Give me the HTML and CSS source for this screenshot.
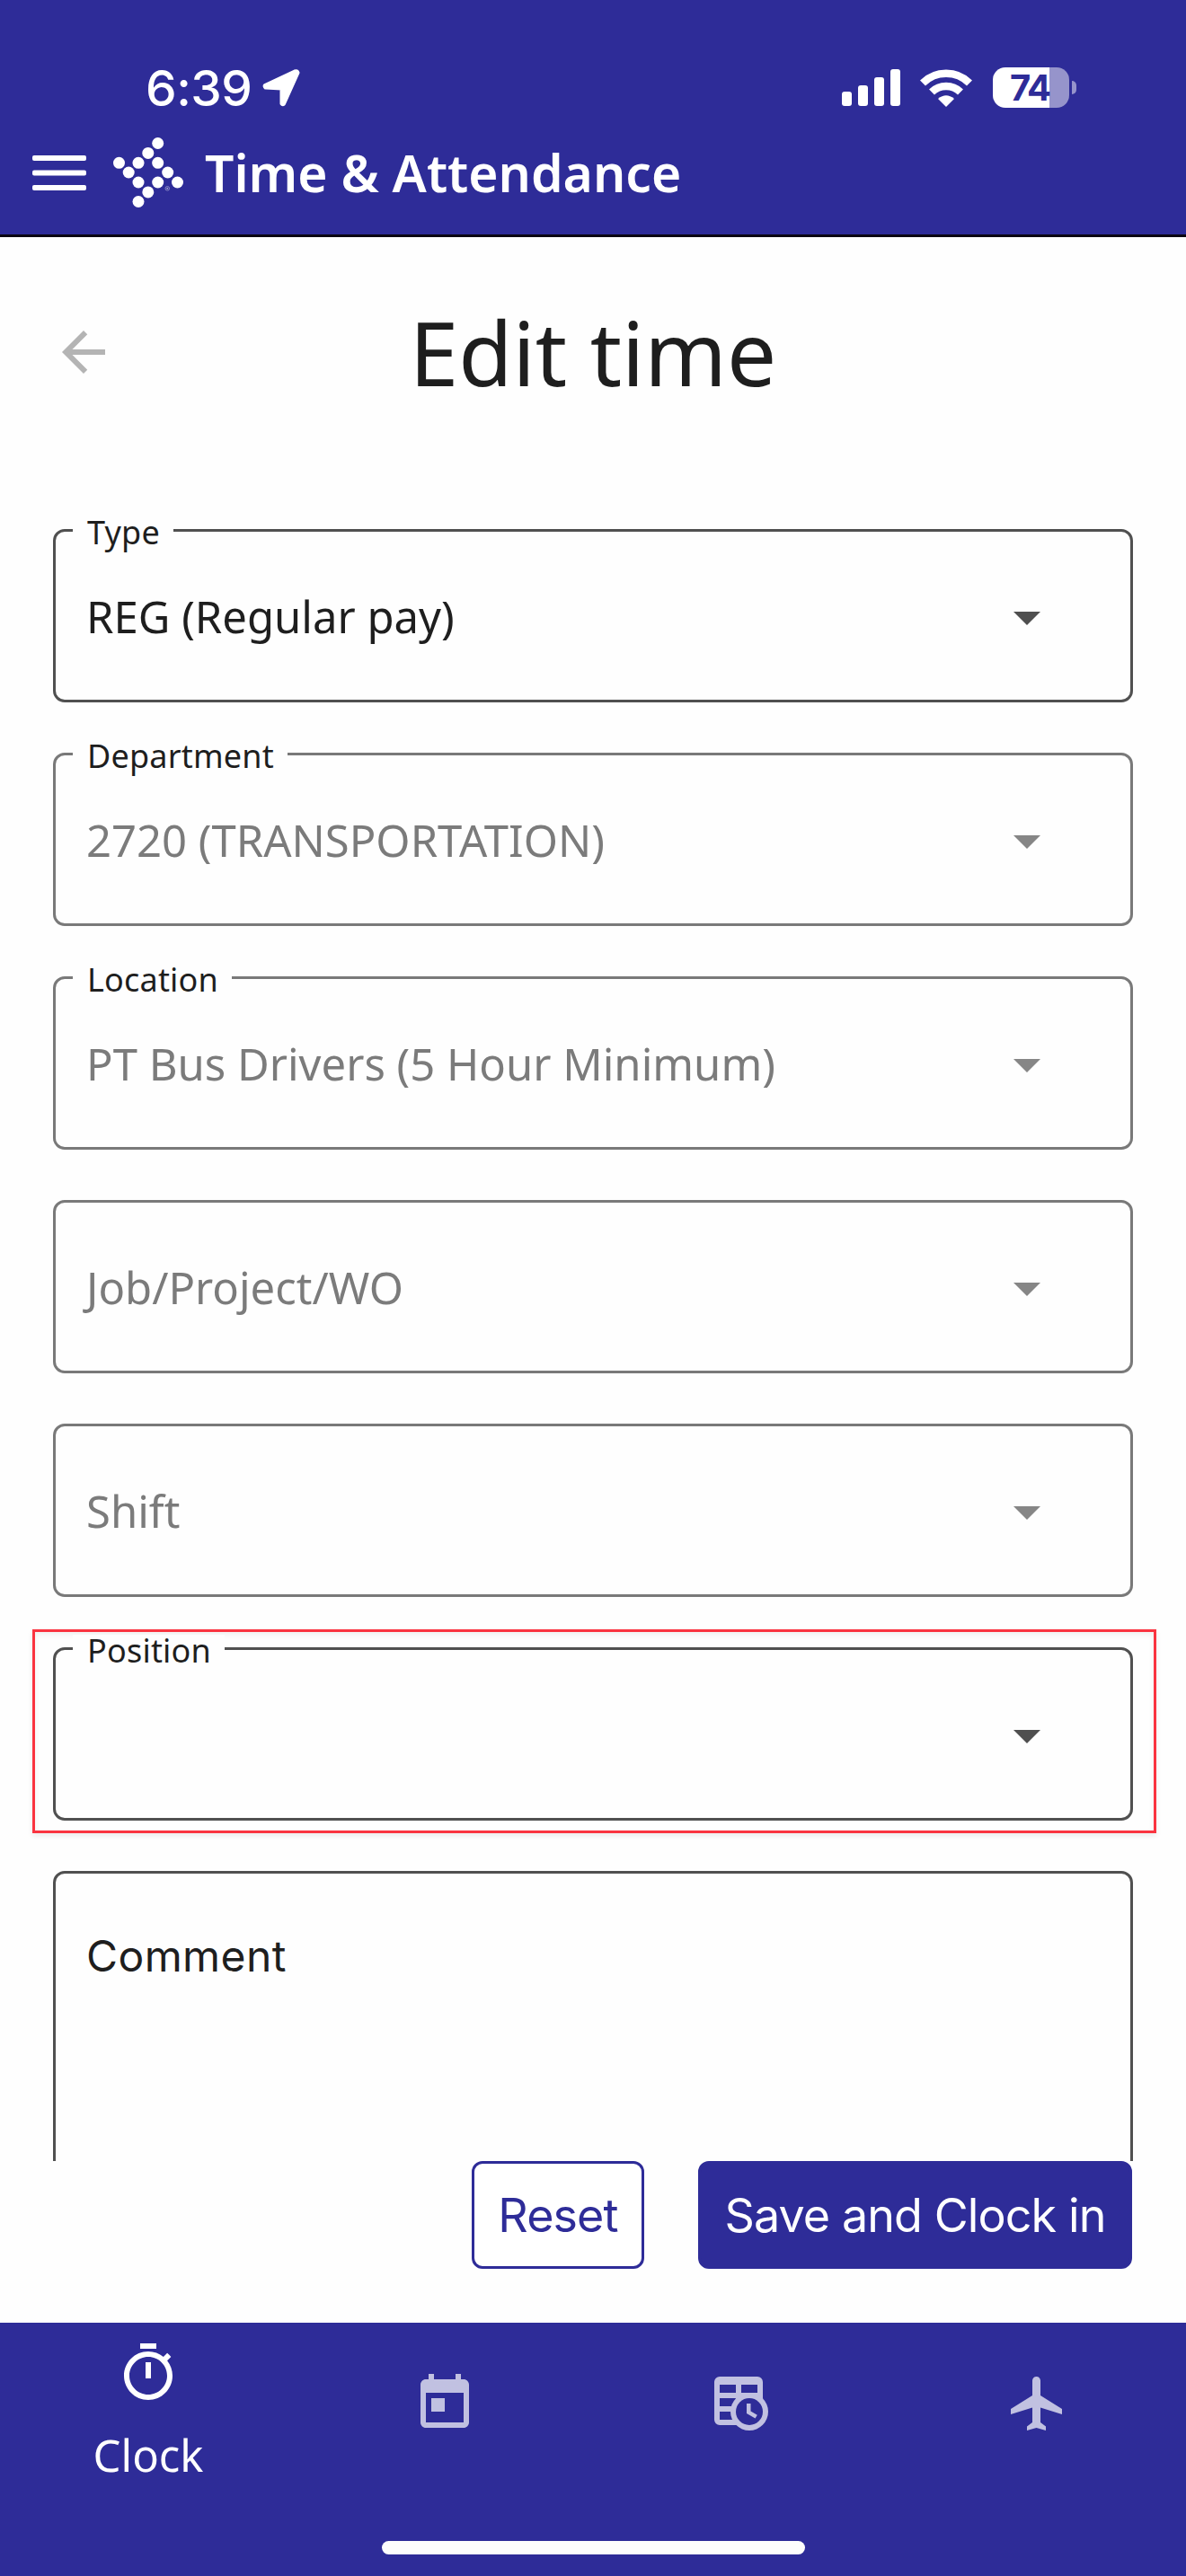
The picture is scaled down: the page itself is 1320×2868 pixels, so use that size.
FILE: index.html
```html
<!DOCTYPE html>
<html lang="en">
<head>
  <meta charset="UTF-8">
  <meta name="viewport" content="width=device-width, initial-scale=1.0">
  <title>Time &amp; Attendance</title>
  <link rel="stylesheet" href="styles.css">
</head>
<body>
  <header class="header">
    <!-- Status bar -->
    <div class="status-bar">
      <div class="status-left">
        <span class="status-time">6:39</span>
        <svg class="location" viewBox="0 0 42 42" width="42" height="42">
          <path d="M3 18 36 2.5Q39 1.500 39.500 4L24 38.500Q22.500 40 21.500 38.500V21.500L3.500 20.500Q2 19 3 18Z" fill="#fff" stroke="#fff" stroke-width="4" stroke-linejoin="round"/>
        </svg>
      </div>
      <div class="status-right">
        <svg viewBox="0 0 65 41" width="65" height="41" fill="#fff">
          <rect x="0" y="25" width="11" height="16" rx="3"/>
          <rect x="18" y="18" width="11" height="23" rx="3"/>
          <rect x="36" y="9" width="11" height="32" rx="3"/>
          <rect x="54" y="0" width="11" height="41" rx="3"/>
        </svg>
        <svg class="wifi" viewBox="0 0 58 42" width="58" height="42">
          <path d="M3 15.500A37 37 0 0 1 55 15.500" fill="none" stroke="#fff" stroke-width="8.500"/>
          <path d="M13 25.500A23 23 0 0 1 45 25.500" fill="none" stroke="#fff" stroke-width="8.500"/>
          <path d="M29 42 20 33Q29 25.500 38 33Z" fill="#fff"/>
        </svg>
        <div class="battery">
          <div class="battery-body"><span>74</span></div>
          <div class="battery-tip"></div>
        </div>
      </div>
    </div>

    <!-- App bar -->
    <div class="app-bar">
      <svg viewBox="0 0 60 39" width="60" height="39" fill="#fff">
        <rect x="0" y="0" width="60" height="6" rx="2"/>
        <rect x="0" y="16.500" width="60" height="6" rx="2"/>
        <rect x="0" y="33" width="60" height="6" rx="2"/>
      </svg>
      <svg class="logo" viewBox="0 0 78 78" width="78" height="78" fill="#fff">
        <circle cx="49.700" cy="6.500" r="6.500"/>
        <circle cx="38.800" cy="17.400" r="6.500"/>
        <circle cx="6.500" cy="28.300" r="6.500"/>
        <circle cx="28" cy="28.300" r="6.500"/>
        <circle cx="49.700" cy="28.300" r="6.500"/>
        <circle cx="17.200" cy="39" r="6.500"/>
        <circle cx="60.700" cy="39" r="6.500"/>
        <circle cx="28" cy="50" r="6.500"/>
        <circle cx="49.700" cy="50" r="6.500"/>
        <circle cx="71.500" cy="50" r="6.500"/>
        <circle cx="38.800" cy="60.900" r="6.500"/>
        <circle cx="28" cy="71.500" r="6.500"/>
        <circle cx="60.300" cy="56.800" r="2.300" fill="none" stroke="#a9a8d4" stroke-width=".7"/>
        <circle cx="60.300" cy="56.800" r="1" fill="#a9a8d4"/>
      </svg>
      <h1 class="app-title">Time &amp; Attendance</h1>
    </div>
  </header>

  <main class="content">
    <div class="page-head">
      <svg class="back" viewBox="0 0 24 24" width="72" height="72" fill="#b4b4b4">
        <path d="M20 11H7.830l5.590-5.590L12 4l-8 8 8 8 1.410-1.410L7.830 13H20v-2z"/>
      </svg>
      <h2 class="page-title">Edit time</h2>
    </div>

    <div class="form">
      <div class="field">
        <label>Type</label>
        <span class="value">REG (Regular pay)</span>
        <i class="caret"></i>
      </div>
      <div class="field disabled">
        <label>Department</label>
        <span class="value">2720 (TRANSPORTATION)</span>
        <i class="caret"></i>
      </div>
      <div class="field disabled">
        <label>Location</label>
        <span class="value">PT Bus Drivers (5 Hour Minimum)</span>
        <i class="caret"></i>
      </div>
      <div class="field disabled">
        <span class="value">Job/Project/WO</span>
        <i class="caret"></i>
      </div>
      <div class="field disabled">
        <span class="value">Shift</span>
        <i class="caret"></i>
      </div>
      <div class="field highlighted">
        <label>Position</label>
        <span class="value"></span>
        <i class="caret"></i>
      </div>
      <div class="field comment">
        <span class="value">Comment</span>
      </div>
    </div>

    <div class="actions">
      <button class="btn btn-outline">Reset</button>
      <button class="btn btn-primary">Save and Clock in</button>
    </div>
  </main>

  <!-- Bottom navigation -->
  <footer class="footer">
    <nav class="tabs">
      <div class="tab active">
        <svg viewBox="0 0 24 24" width="72" height="72">
          <path d="M15 1H9v2h6V1zm-4 13h2V8h-2v6zm8.030-6.610l1.420-1.420c-.43-.51-.9-.99-1.410-1.410l-1.420 1.420C16.070 4.740 14.120 4 12 4c-4.970 0-9 4.030-9 9s4.020 9 9 9 9-4.030 9-9c0-2.120-.74-4.070-1.970-5.610zM12 20c-3.870 0-7-3.130-7-7s3.130-7 7-7 7 3.130 7 7-3.130 7-7 7z"/>
        </svg>
        <span>Clock</span>
      </div>
      <div class="tab">
        <svg viewBox="0 0 24 24" width="72" height="72">
          <path d="M19 3h-1V1h-2v2H8V1H6v2H5c-1.110 0-1.990.9-1.990 2L3 19c0 1.100.89 2 2 2h14c1.100 0 2-.9 2-2V5c0-1.100-.9-2-2-2zm0 16H5V8h14v11zM7 10h5v5H7v-5z"/>
        </svg>
      </div>
      <div class="tab">
        <svg viewBox="0 0 24 24" width="72" height="72">
          <path fill-rule="evenodd" d="M4 2h14a2 2 0 0 1 2 2v14a2 2 0 0 1-2 2H4a2 2 0 0 1-2-2V4a2 2 0 0 1 2-2zM4 5v3h6V5zM12 5v3h6V5zM4 10v3h6v-3zM4 15v3h6v-3z"/>
          <circle cx="15" cy="15" r="7"/>
          <circle class="clock-face" cx="15" cy="15" r="5"/>
          <path d="M14 12v3.690l3.190 1.840.75-1.300-2.440-1.410V12z"/>
        </svg>
      </div>
      <div class="tab">
        <svg viewBox="0 0 24 24" width="72" height="72">
          <path d="M21 16v-2l-8-5V3.500c0-.83-.67-1.500-1.500-1.500S10 2.670 10 3.500V9l-8 5v2l8-2.500V19l-2 1.500V22l3.500-1 3.500 1v-1.500L13 19v-5.500l8 2.500z"/>
        </svg>
      </div>
    </nav>
    <div class="home-indicator"></div>
  </footer>
</body>
</html>
```
FILE: styles.css
```css
* {
  box-sizing: border-box;
}

body {
  margin: 0;
  width: 1320px;
  height: 2868px;
  display: flex;
  flex-direction: column;
  overflow: hidden;
  background-color: #fefefe;
  color: #1e1e1e;
  font-family: "Noto Sans", "Open Sans", sans-serif;
}

svg {
  display: block;
  flex-shrink: 0;
}

h1, h2 {
  margin: 0;
}

/* Header */
.header {
  height: 264px;
  background-color: #2e2c98;
  border-bottom: 3px solid #0b0612;
  color: #fff;
  flex-shrink: 0;
}

.status-bar {
  height: 147px;
  padding: 51px 122px 0 162px;
  display: flex;
  justify-content: space-between;
  align-items: flex-start;
}

.status-left,
.status-right {
  display: flex;
  align-items: center;
  height: 93px;
}

.status-time {
  width: 130px;
  font-family: Inter, sans-serif;
  font-size: 55px;
  font-weight: 500;
  letter-spacing: -0.5px;
}

.wifi {
  margin-left: 22px;
}

.battery {
  display: flex;
  align-items: center;
  gap: 3px;
  margin-left: 23px;
}

.battery-body {
  width: 85px;
  height: 45px;
  border-radius: 14px;
  background: linear-gradient(to right, #fff 63px, #9694cb 63px);
  color: #2e2c98;
  font: bold 40px/45px Inter, sans-serif;
  letter-spacing: -2px;
  padding-left: 19px;
}

.battery-tip {
  width: 5px;
  height: 15px;
  border-radius: 0 5px 5px 0;
  background-color: #9694cb;
}

.app-bar {
  display: flex;
  align-items: center;
  height: 90px;
  padding-left: 36px;
}

.logo {
  margin-left: 30px;
}

.app-title {
  margin-left: 24px;
  font-size: 57px;
  font-weight: 600;
  line-height: 90px;
}

/* Page */
.content {
  height: 2322px;
  display: flex;
  flex-direction: column;
}

.page-head {
  height: 325px;
  flex-shrink: 0;
  display: grid;
  grid-template-columns: 72px 1fr 72px;
  padding: 53px 57px 0;
}

.back {
  margin-top: 39px;
}

.page-title {
  font-size: 98px;
  font-weight: 400;
  line-height: 150px;
  text-align: center;
}

.form {
  height: 1817px;
  flex-shrink: 0;
  display: flex;
  flex-direction: column;
  gap: 56px;
  padding: 0 59px;
  overflow: hidden;
  margin-top: -40px;
  padding-top: 40px;
  box-sizing: content-box;
}

.field {
  position: relative;
  height: 193px;
  flex-shrink: 0;
  display: flex;
  align-items: center;
  justify-content: space-between;
  padding: 0 100px 0 34px;
  border: 3px solid #505050;
  border-radius: 13px;
  font-size: 49px;
}

/* Label sits on top of the outline */
.field label {
  position: absolute;
  top: -17px;
  left: 19px;
  padding: 0 15px 0 16px;
  background-color: #fefefe;
  color: #1e1e1e;
  font-size: 36px;
  line-height: 36px;
  letter-spacing: 0.2px;
}

.caret {
  margin-top: 5px;
  border-left: 15px solid transparent;
  border-right: 15px solid transparent;
  border-top: 15px solid #4f4f4f;
}

.field.disabled {
  border-color: #797979;
  color: #7b7b7b;
}

.field.disabled .caret {
  border-top-color: #868686;
}

/* Red marker around the field */
.field.highlighted::before {
  content: "";
  position: absolute;
  top: -23px;
  right: -29px;
  bottom: -17px;
  left: -26px;
  border: 3px solid #fa3440;
  box-shadow: 0 3px 6px rgba(0, 0, 0, 0.08), inset 0 3px 6px rgba(0, 0, 0, 0.06);
}

.field.comment {
  height: 400px;
  align-items: flex-start;
  padding-top: 59px;
  font-family: Inter, sans-serif;
  font-size: 48px;
  letter-spacing: 0.4px;
  line-height: 66px;
}

.actions {
  display: flex;
  justify-content: flex-end;
  gap: 60px;
  padding-right: 60px;
}

.btn {
  height: 120px;
  border: 3px solid #2e2c98;
  border-radius: 12px;
  font-family: Inter, sans-serif;
  font-size: 52px;
  letter-spacing: -0.9px;
}

.btn-outline {
  width: 192px;
  padding: 0;
  background-color: #fff;
  color: #2e2c98;
}

.btn-primary {
  width: 483px;
  padding: 0;
  background-color: #2e2c98;
  color: #fff;
}

/* Footer */
.footer {
  height: 282px;
  background-color: #2e2c98;
  display: flex;
  flex-direction: column;
  align-items: center;
}

.tabs {
  width: 100%;
  height: 243px;
  display: grid;
  grid-template-columns: repeat(4, 1fr);
}

.tab {
  display: flex;
  flex-direction: column;
  align-items: center;
  padding-top: 54px;
  fill: #c1c1e1;
}

.tab.active {
  padding-top: 20px;
  fill: #fff;
  color: #fff;
  font-size: 49px;
}

.tab span {
  margin-top: 22px;
  line-height: 66px;
}

.clock-face {
  fill: #2e2c98;
}

.home-indicator {
  width: 471px;
  height: 15px;
  border-radius: 8px;
  background-color: #fdfdfd;
}
```
